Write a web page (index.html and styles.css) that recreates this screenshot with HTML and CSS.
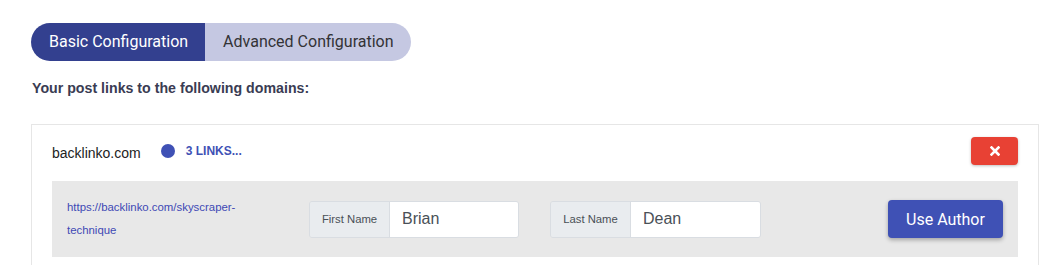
FILE: index.html
```html
<!DOCTYPE html>
<html>
<head>
<meta charset="utf-8">
<link rel="stylesheet" href="styles.css">
</head>
<body>
<div class="page">
  <div class="tabs">
    <div class="tab tab-active">Basic Configuration</div>
    <div class="tab tab-inactive">Advanced Configuration</div>
  </div>
  <h3 class="heading">Your post links to the following domains:</h3>
  <div class="card">
    <div class="card-head">
      <span class="domain">backlinko.com</span>
      <span class="dot"></span>
      <span class="links">3 LINKS...</span>
      <button class="btn-delete" type="button" aria-label="Remove">
        <svg width="10" height="10" viewBox="0 0 10 10"><path d="M1.5 1.5 L8.5 8.5 M8.5 1.5 L1.5 8.5" stroke="#fff" stroke-width="2.6" stroke-linecap="square"/></svg>
      </button>
    </div>
    <div class="link-row">
      <div class="url-col"><a class="url" href="#">https://backlinko.com/skyscraper-technique</a></div>
      <div class="input-group">
        <span class="ig-label">First Name</span>
        <span class="ig-value">Brian</span>
      </div>
      <div class="input-group">
        <span class="ig-label">Last Name</span>
        <span class="ig-value">Dean</span>
      </div>
      <div class="btn-col"><button class="btn-author" type="button">Use Author</button></div>
    </div>
  </div>
</div>
</body>
</html>
```
FILE: styles.css
```css
html, body {
  margin: 0;
  padding: 0;
  background: #ffffff;
}
.page {
  padding: 23px 0 0 31px;
  font-family: "Liberation Sans", Arial, sans-serif;
}
.tabs {
  display: inline-flex;
  height: 38px;
  border-radius: 19px;
  overflow: hidden;
  font-family: Roboto, "Liberation Sans", sans-serif;
  font-size: 16px;
}
.tab {
  padding: 0 18px;
  line-height: 38px;
}
.tab-active {
  background: #33408f;
  color: #ffffff;
  padding-right: 17px;
}
.tab-inactive {
  background: #c5c8e2;
  color: #333336;
  padding-right: 17px;
}
.heading {
  margin: 19px 0 0 1px;
  font-size: 14.2px;
  line-height: 16px;
  font-weight: bold;
  color: #3a3c53;
}
.card {
  box-sizing: border-box;
  width: 1008px;
  margin-top: 28px;
  border: 1px solid #e6e6e6;
  padding: 12px 20px 20px 20px;
}
.card-head {
  display: flex;
  align-items: center;
  height: 28px;
}
.domain {
  font-size: 14px;
  color: #222222;
  margin-top: 3px;
}
.dot {
  width: 14px;
  height: 14px;
  border-radius: 50%;
  background: #3f51b5;
  margin-left: 20px;
}
.links {
  margin-left: 11px;
  font-size: 12px;
  font-weight: bold;
  color: #3f51b5;
}
.btn-delete {
  margin-left: auto;
  width: 47px;
  height: 28px;
  border: 0;
  border-radius: 4px;
  background: #e84134;
  box-shadow: 0 1px 3px rgba(0, 0, 0, 0.25);
  display: flex;
  align-items: center;
  justify-content: center;
  padding: 0;
}
.link-row {
  margin-top: 16px;
  height: 76px;
  background: #e8e8e8;
  padding: 0 15px;
  display: grid;
  grid-template-columns: 242px 241px 211px 1fr;
  align-items: center;
}
.url-col {
  max-width: 200px;
}
.url {
  font-size: 11.4px;
  line-height: 23px;
  color: #4049b5;
  text-decoration: none;
}
.input-group {
  display: flex;
  box-sizing: border-box;
  width: 210px;
  height: 37px;
  border: 1px solid #d9dde2;
  border-radius: 3px;
  overflow: hidden;
}
.input-group:nth-child(3) {
  width: 211px;
}
.ig-label {
  box-sizing: border-box;
  width: 80px;
  background: #e9ecef;
  border-right: 1px solid #d9dde2;
  font-size: 11.3px;
  color: #495057;
  display: flex;
  align-items: center;
  justify-content: center;
}
.ig-value {
  flex: 1;
  background: #ffffff;
  padding-left: 12px;
  font-size: 16px;
  color: #495057;
  display: flex;
  align-items: center;
}
.btn-col {
  display: flex;
  justify-content: flex-end;
}
.btn-author {
  width: 115px;
  height: 38px;
  border: 0;
  border-radius: 4px;
  background: #3f51b5;
  color: #ffffff;
  font-family: Roboto, "Liberation Sans", sans-serif;
  font-size: 16px;
  box-shadow: 0 2px 4px rgba(0, 0, 0, 0.3);
  padding: 0;
}
```
